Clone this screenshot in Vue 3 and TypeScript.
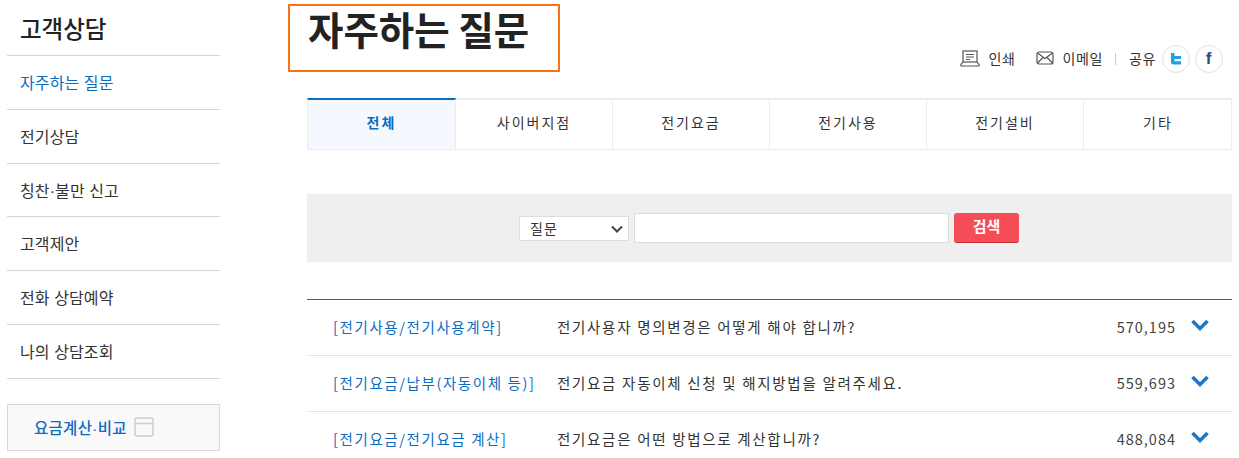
<template>
  <div class="page">
    <!-- 좌측 메뉴 -->
    <aside class="side">
      <h2 class="side-title">고객상담</h2>
      <ul class="side-menu">
        <li v-for="(m, i) in menus" :key="m" :class="{ on: i === 0 }">{{ m }}</li>
      </ul>
      <a class="calc-box">
        <span>요금계산·비교</span>
        <svg width="20" height="20" viewBox="0 0 20 20" fill="none" stroke="#ccc" stroke-width="1.5">
          <rect x="1" y="1" width="18" height="18" rx="2" />
          <path d="M1 6.500h18" />
        </svg>
      </a>
    </aside>

    <main class="content">
      <header class="head">
        <h1 class="title">자주하는 질문</h1>
        <div class="tools">
          <span class="tool">
            <svg width="20" height="17" viewBox="0 0 20 17" fill="none" stroke="#555" stroke-width="1.2">
              <rect x="3" y="1" width="14" height="11" />
              <path d="M6 4.500h8M6 7h8M6 9.500h4" />
              <path d="M3 12l-2 2.500v1.500h18v-1.500L17 12" />
            </svg>
            인쇄
          </span>
          <span class="tool mail">
            <svg width="18" height="14" viewBox="0 0 18 14" fill="none" stroke="#555" stroke-width="1.2">
              <rect x="1" y="1" width="16" height="12" rx="2" />
              <path d="M1.500 2l7.500 5.500L16.500 2M1.500 12l5.500-5.500M16.500 12L11 6.500" />
            </svg>
            이메일
          </span>
          <i class="sep"></i>
          <span class="tool share">공유</span>
          <span class="sns tw">
            <svg width="14" height="14" viewBox="0 0 14 14">
              <path d="M2 1h3.500v3H12v3H5.500v2.200H12V12.500H4.500Q2 12.500 2 10Z" fill="#1da1e6" />
            </svg>
          </span>
          <span class="sns fb">f</span>
        </div>
      </header>

      <nav class="tabs">
        <a v-for="(t, i) in tabs" :key="t" class="tab" :class="{ on: i === 0 }">{{ t }}</a>
      </nav>

      <form class="search" @submit.prevent>
        <span class="sel-wrap">
          <select class="sel">
            <option>질문</option>
          </select>
          <svg class="sel-arrow" width="12" height="8" viewBox="0 0 12 8" fill="none" stroke="#444" stroke-width="2">
            <path d="M1 1.500l5 5 5-5" />
          </svg>
        </span>
        <input class="kw" type="text" />
        <button class="btn">검색</button>
      </form>

      <ul class="faq">
        <li v-for="f in faqs" :key="f.q" class="row">
          <span class="cat">{{ f.cat }}</span>
          <span class="q">{{ f.q }}</span>
          <span class="hit">{{ f.hit }}</span>
          <svg class="arrow" width="18" height="12" viewBox="0 0 18 12" fill="none" stroke="#1b76c8" stroke-width="3.500">
            <path d="M1.500 2l7.500 7.500L16.500 2" />
          </svg>
        </li>
      </ul>
    </main>

    <!-- 주황색 강조 박스 -->
    <div class="mark"></div>
  </div>
</template>

<script setup lang="ts">
const menus = ['자주하는 질문', '전기상담', '칭찬·불만 신고', '고객제안', '전화 상담예약', '나의 상담조회']
const tabs = ['전체', '사이버지점', '전기요금', '전기사용', '전기설비', '기타']
const faqs = [
  { cat: '[전기사용/전기사용계약]', q: '전기사용자 명의변경은 어떻게 해야 합니까?', hit: '570,195' },
  { cat: '[전기요금/납부(자동이체 등)]', q: '전기요금 자동이체 신청 및 해지방법을 알려주세요.', hit: '559,693' },
  { cat: '[전기요금/전기요금 계산]', q: '전기요금은 어떤 방법으로 계산합니까?', hit: '488,084' }
]
</script>

<style>
html,
body {
  overflow: hidden;
  background: #fff;
}
</style>

<style scoped>
.page {
  position: relative;
  display: flex;
  width: 1239px;
  height: 458px;
  padding: 0 7px;
  box-sizing: border-box;
  overflow: hidden;
  font-family: "Noto Sans CJK KR", "Liberation Sans", sans-serif;
  color: #333;
}

ul {
  margin: 0;
  padding: 0;
  list-style: none;
}

.side {
  width: 213px;
  flex: none;
  margin-right: 87px;
}

.side-title {
  height: 56px;
  margin: 0;
  padding: 12px 0 0 13px;
  box-sizing: border-box;
  font-size: 23.500px;
  line-height: 32px;
  font-weight: 500;
  color: #222;
  border-bottom: 1px solid #d5d5d5;
}

.side-menu li {
  height: 53.800px;
  box-sizing: border-box;
  padding-left: 13px;
  line-height: 55px;
  font-family: "Liberation Sans", "Noto Sans CJK KR", sans-serif;
  font-size: 16px;
  letter-spacing: 0.1px;
  border-bottom: 1px solid #d5d5d5;
}

.side-menu li.on {
  color: #0b6cc0;
}

.calc-box {
  display: flex;
  align-items: center;
  height: 47px;
  margin-top: 25px;
  padding-left: 26px;
  box-sizing: border-box;
  gap: 7px;
  background: #f9f9f9;
  border: 1px solid #d8d8d8;
  font-family: "Liberation Sans", "Noto Sans CJK KR", sans-serif;
  font-size: 15.500px;
  letter-spacing: 0.3px;
  font-weight: 500;
  color: #0b6cc0;
}

.content {
  width: 925px;
  flex: none;
}

.head {
  display: flex;
  justify-content: space-between;
  height: 98px;
}

.title {
  margin: 0;
  padding: 2px 0 0 1px;
  font-size: 38.500px;
  line-height: 52px;
  font-weight: 700;
  color: #222;
}

.tools {
  display: flex;
  align-items: center;
  height: 28px;
  margin: 45px 9px 0 0;
  font-size: 14px;
  letter-spacing: 0.6px;
  color: #333;
}

.tool {
  display: flex;
  align-items: center;
  gap: 9px;
  margin-top: -2px;
}

.mail {
  margin-left: 20px;
}

.share {
  margin-right: 1px;
}

.sep {
  width: 1px;
  height: 12px;
  margin: 0 13px 0 12px;
  background: #ccc;
}

.sns {
  display: flex;
  align-items: center;
  justify-content: center;
  width: 28px;
  height: 28px;
  box-sizing: border-box;
  border: 1px solid #e2e2e2;
  border-radius: 50%;
  margin-left: 5px;
}

.sns.fb {
  font-family: "Liberation Sans", sans-serif;
  font-weight: 700;
  font-size: 17px;
  color: #2b4a84;
}

.tabs {
  display: grid;
  grid-template-columns: 149px repeat(4, 157px) 148px;
  height: 52px;
  box-sizing: border-box;
  border-top: 2px solid #ececec;
  border-bottom: 1px solid #ececec;
  border-right: 1px solid #ececec;
}

.tab {
  display: flex;
  align-items: center;
  justify-content: center;
  padding-bottom: 5px;
  border-right: 1px solid #ececec;
  font-size: 14px;
  letter-spacing: 2px;
  color: #333;
}

.tab:last-child {
  border-right: 0;
}

.tab.on {
  margin-top: -2px;
  border-top: 2px solid #0b6cc0;
  border-left: 1px solid #ececec;
  background: #f5f9ff;
  color: #0b6cc0;
  font-weight: 700;
}

.search {
  display: flex;
  align-items: center;
  justify-content: center;
  gap: 5px;
  height: 68px;
  margin-top: 44px;
  padding-right: 1px;
  background: #efefef;
}

.sel-wrap {
  position: relative;
  display: flex;
}

.sel {
  width: 110px;
  height: 25px;
  padding-left: 10px;
  border: 1px solid #ddd;
  border-radius: 0;
  background: #fff;
  appearance: none;
  font: inherit;
  font-size: 14px;
  letter-spacing: 1px;
  color: #333;
}

.sel-arrow {
  position: absolute;
  right: 6px;
  top: 9px;
}

.kw {
  width: 315px;
  height: 30px;
  padding: 0;
  box-sizing: border-box;
  border: 1px solid #ddd;
  background: #fff;
}

.btn {
  width: 65px;
  height: 30px;
  padding: 0 0 4px;
  border: 0;
  border-bottom: 1px solid #c9323d;
  border-radius: 3px;
  background: #f44d58;
  font: inherit;
  font-size: 15px;
  font-weight: 700;
  color: #fff;
}

.faq {
  margin-top: 37px;
  border-top: 1px solid #0b6cc0;
}

.row {
  display: flex;
  align-items: center;
  height: 56px;
  box-sizing: border-box;
  padding: 0 0 3px 26px;
  border-bottom: 1px solid #e4e4e4;
  font-size: 14.500px;
  letter-spacing: 1.700px;
}

.cat {
  width: 224px;
  flex: none;
  letter-spacing: 1.600px;
  color: #0b6cc0;
}

.q {
  flex: 1;
  color: #333;
}

.hit {
  letter-spacing: 1px;
  color: #444;
}

.arrow {
  margin: -3px 23px 0 15px;
}

.mark {
  position: absolute;
  left: 288px;
  top: 4px;
  width: 272px;
  height: 68px;
  box-sizing: border-box;
  border: 2px solid #f97316;
}
</style>
